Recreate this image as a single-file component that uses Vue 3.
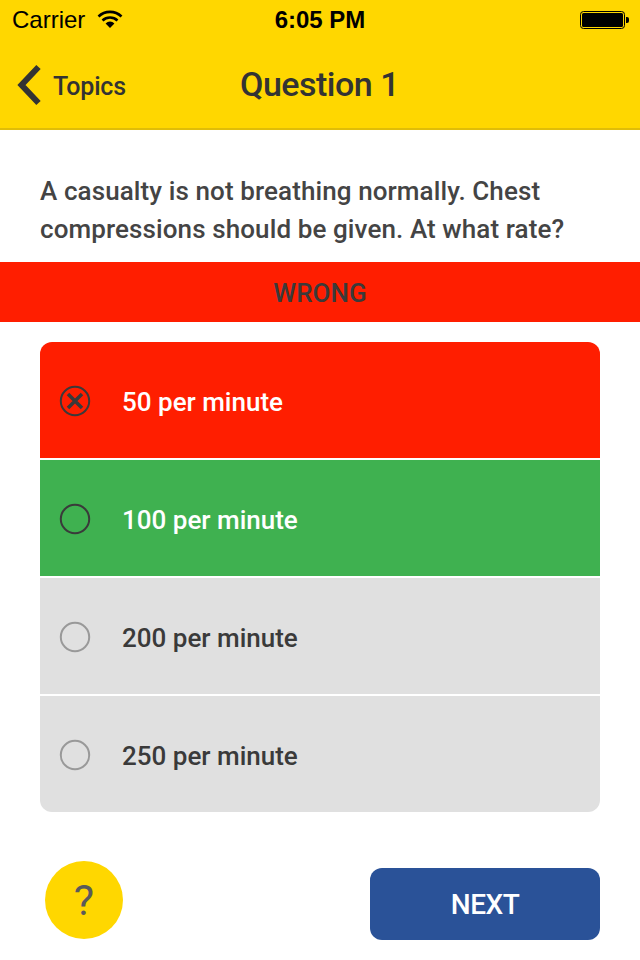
<template>
  <div class="screen">
    <header class="top">
      <div class="status">
        <span class="carrier">Carrier</span>
        <svg class="wifi" width="26" height="18" viewBox="0 0 26 18">
          <path d="M1.5 6.5a16.5 16.5 0 0 1 23 0" fill="none" stroke="#000" stroke-width="2.6" />
          <path d="M5.5 10.5a11 11 0 0 1 15 0" fill="none" stroke="#000" stroke-width="2.6" />
          <path d="M13 18l-4.4-4.6a6.2 6.2 0 0 1 8.8 0z" fill="#000" />
        </svg>
        <span class="clock">6:05 PM</span>
        <svg class="battery" width="50" height="20" viewBox="0 0 50 20">
          <rect x="0.5" y="1.5" width="44" height="17" rx="3" fill="none" stroke="#000" />
          <rect x="2" y="3" width="41" height="14" rx="1.5" fill="#000" />
          <path d="M46 7h1a2 2 0 0 1 2 2v2a2 2 0 0 1-2 2h-1z" fill="#000" />
        </svg>
      </div>
      <div class="nav">
        <div class="back">
          <svg width="28" height="42" viewBox="0 0 28 42">
            <path d="M23.5 3L6.5 21l17 18" fill="none" stroke="#333" stroke-width="6" />
          </svg>
          <span>Topics</span>
        </div>
        <h1>Question 1</h1>
      </div>
    </header>

    <p class="question">A casualty is not breathing normally. Chest compressions should be given. At what rate?</p>

    <div class="banner">WRONG</div>

    <ul class="answers">
      <li v-for="a in answers" :key="a.text" :class="a.state">
        <svg class="mark" width="32" height="32" viewBox="0 0 32 32">
          <circle cx="16" cy="16" r="14.2" fill="none" :stroke="a.state === 'idle' ? '#999' : '#3a3a3a'" stroke-width="2" />
          <path v-if="a.state === 'wrong'" d="M9 9l14 14M23 9L9 23" stroke="#3a3a3a" stroke-width="3.5" />
        </svg>
        <span>{{ a.text }}</span>
      </li>
    </ul>

    <div class="actions">
      <button class="hint">?</button>
      <button class="next">NEXT</button>
    </div>
  </div>
</template>

<script setup>
const answers = [
  { text: '50 per minute', state: 'wrong' },
  { text: '100 per minute', state: 'right' },
  { text: '200 per minute', state: 'idle' },
  { text: '250 per minute', state: 'idle' }
]
</script>

<style>
html, body {
  background: #fff;
}
</style>

<style scoped>
.screen {
  width: 640px;
  height: 960px;
  font-family: Roboto, "Liberation Sans", sans-serif;
  color: #3a3a3a;
  overflow: hidden;
}

.top {
  height: 128px;
  background: #ffd700;
  border-bottom: 2px solid #e0bd08;
}

.status {
  position: relative;
  height: 40px;
  display: flex;
  align-items: center;
  padding: 0 12px;
  color: #000;
  font-family: "Liberation Sans", sans-serif;
  font-size: 24px;
}

.wifi {
  margin-left: 12px;
  margin-top: -3px;
}

.clock {
  position: absolute;
  left: 0;
  right: 0;
  text-align: center;
  font-weight: 700;
}

.battery {
  position: absolute;
  right: 10px;
  top: 10px;
}

.nav {
  position: relative;
  height: 88px;
  display: flex;
  align-items: center;
  justify-content: center;
}

.back {
  position: absolute;
  left: 15px;
  top: 24px;
  display: flex;
  align-items: center;
  gap: 10px;
  font-size: 25px;
  font-weight: 500;
  letter-spacing: -0.2px;
  color: #333;
}

.back span {
  margin-top: 2px;
}

.nav h1 {
  margin: 0 0 0 -1px;
  font-size: 34px;
  font-weight: 500;
  letter-spacing: -0.5px;
  color: #333;
}

.question {
  margin: 0;
  padding: 42px 40px 14px;
  font-size: 26px;
  line-height: 38px;
  font-weight: 500;
  letter-spacing: 0.1px;
  color: #444;
}

.banner {
  height: 60px;
  line-height: 62px;
  background: #ff1e00;
  text-align: center;
  font-size: 26px;
  font-weight: 500;
}

.answers {
  list-style: none;
  margin: 20px 40px 0;
  padding: 0;
  display: flex;
  flex-direction: column;
  gap: 2px;
  border-radius: 12px;
  overflow: hidden;
}

.answers li {
  box-sizing: border-box;
  height: 116px;
  display: flex;
  align-items: center;
  gap: 31px;
  padding: 2px 0 0 19px;
  font-size: 26px;
  font-weight: 500;
}

.answers li span {
  margin-top: 2px;
}

.answers .wrong {
  background: #ff1e00;
  color: #fff;
}

.answers .right {
  background: #3fb150;
  color: #fff;
}

.answers .idle {
  background: #e0e0e0;
}

.actions {
  display: flex;
  justify-content: space-between;
  padding: 49px 40px 0 45px;
}

.hint {
  width: 78px;
  height: 78px;
  border: 0;
  border-radius: 50%;
  background: #ffd700;
  color: #5a5a5a;
  font-family: inherit;
  font-size: 43px;
  font-weight: 400;
  padding: 0;
}

.next {
  width: 230px;
  height: 72px;
  margin-top: 7px;
  border: 0;
  border-radius: 12px;
  background: #2a5298;
  color: #fff;
  font-family: inherit;
  font-size: 28px;
  font-weight: 500;
  letter-spacing: -0.5px;
  padding: 0;
}
</style>
